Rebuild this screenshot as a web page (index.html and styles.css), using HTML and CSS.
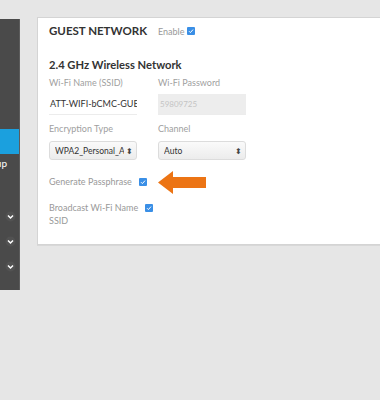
FILE: index.html
```html
<!DOCTYPE html>
<html lang="en">
<head>
  <meta charset="UTF-8">
  <meta name="viewport" content="width=device-width, initial-scale=1.0">
  <title>Guest Network</title>
  <link rel="stylesheet" href="styles.css">
</head>
<body>
  <div class="page">
    <nav class="sidebar">
      <div class="nav-item"></div>
      <div class="nav-item"></div>
      <div class="nav-item"></div>
      <div class="nav-item"></div>
      <div class="nav-item active"></div>
      <div class="nav-item sub">Setup</div>
      <div class="nav-item"></div>
      <div class="nav-item chevron"><svg width="11" height="11" viewBox="0 0 11 11"><circle cx="5.5" cy="5.5" r="5" fill="#525252"/><polyline points="3,4.5 5.5,7 8,4.5" fill="none" stroke="#fff" stroke-width="1.5"/></svg></div>
      <div class="nav-item chevron"><svg width="11" height="11" viewBox="0 0 11 11"><circle cx="5.5" cy="5.5" r="5" fill="#525252"/><polyline points="3,4.5 5.5,7 8,4.5" fill="none" stroke="#fff" stroke-width="1.5"/></svg></div>
      <div class="nav-item chevron"><svg width="11" height="11" viewBox="0 0 11 11"><circle cx="5.5" cy="5.5" r="5" fill="#525252"/><polyline points="3,4.5 5.5,7 8,4.5" fill="none" stroke="#fff" stroke-width="1.5"/></svg></div>
    </nav>

    <main class="card">
      <div class="card-head">
        <h3 class="section-title">GUEST NETWORK</h3>
        <span class="enable">Enable</span>
        <span class="check"><svg width="8" height="8" viewBox="0 0 8 8"><polyline points="2,4.2 3.4,5.6 6,2.6" fill="none" stroke="#fff" stroke-width="1"/></svg></span>
      </div>

      <h2 class="band-title">2.4 GHz Wireless Network</h2>

      <div class="fields">
        <div class="field">
          <label class="field-label">Wi-Fi Name (SSID)</label>
          <div class="text-input">ATT-WIFI-bCMC-GUE</div>
        </div>
        <div class="field">
          <label class="field-label">Wi-Fi Password</label>
          <div class="text-input disabled">59809725</div>
        </div>
        <div class="field">
          <label class="field-label">Encryption Type</label>
          <div class="select-box"><span class="select-text">WPA2_Personal_AES</span><span class="updown">&#x2B0D;</span></div>
        </div>
        <div class="field">
          <label class="field-label">Channel</label>
          <div class="select-box"><span class="select-text">Auto</span><span class="updown">&#x2B0D;</span></div>
        </div>
      </div>

      <div class="option-row generate">
        <span class="option-label">Generate Passphrase</span>
        <span class="check"><svg width="8" height="8" viewBox="0 0 8 8"><polyline points="2,4.2 3.4,5.6 6,2.6" fill="none" stroke="#fff" stroke-width="1"/></svg></span>
        <svg class="arrow" width="48" height="23" viewBox="0 0 48 23"><polygon points="0,11.5 15,0 15,6 48,6 48,17 15,17 15,23" fill="#ec7414"/></svg>
      </div>

      <div class="option-row broadcast">
        <span class="option-label wrap">Broadcast Wi-Fi Name SSID</span>
        <span class="check"><svg width="8" height="8" viewBox="0 0 8 8"><polyline points="2,4.2 3.4,5.6 6,2.6" fill="none" stroke="#fff" stroke-width="1"/></svg></span>
      </div>
    </main>
  </div>
</body>
</html>
```
FILE: styles.css
```css
body {
  margin: 0;
  background: #e6e6e6;
  font-family: Lato, 'Noto Sans', sans-serif;
  color: #333;
}
.page {
  display: flex;
  align-items: flex-start;
  height: 400px;
  overflow: hidden;
}
.sidebar {
  width: 19px;
  flex: none;
  margin-top: 19px;
  padding: 10px 0 11px;
  background: #4a4a4a;
  border-right: 1px solid #5c5c5c;
  display: flex;
  flex-direction: column;
}
.nav-item {
  height: 25px;
  flex: none;
  display: flex;
  align-items: center;
  justify-content: flex-end;
  overflow: hidden;
  white-space: nowrap;
  padding-right: 12px;
  font-size: 10px;
  color: #fff;
}
.nav-item.active {
  background: #1ba0de;
}
.nav-item.sub {
  align-items: flex-start;
  padding-top: 3px;
  box-sizing: border-box;
}
.nav-item.chevron {
  padding-right: 3px;
}
.nav-item.chevron svg {
  display: block;
}
.card {
  margin: 17px 0 0 17px;
  width: 360px;
  flex: none;
  background: #fff;
  border: 1px solid #d4d4d4;
  box-shadow: 0 1px 0 #d8d8d8;
  padding: 6px 12px 17px 11px;
}
.card-head {
  display: flex;
  align-items: center;
  height: 14px;
}
.section-title {
  margin: 0;
  font-size: 11.5px;
  font-weight: 700;
  color: #333;
  line-height: 14px;
}
.enable {
  margin-left: 11px;
  margin-right: 2px;
  font-size: 9px;
  color: #999;
}
.check {
  display: inline-flex;
  width: 8px;
  height: 8px;
  background: #3a8fe6;
  border-radius: 1px;
}
.check svg {
  display: block;
}
.band-title {
  margin: 19px 0 0;
  font-size: 11.2px;
  font-weight: 700;
  line-height: 16px;
  color: #333;
}
.fields {
  display: grid;
  grid-template-columns: 88px 88px;
  column-gap: 21px;
  row-gap: 8px;
  margin-top: 4px;
}
.field {
  display: flex;
  flex-direction: column;
}
.field-label {
  font-size: 9px;
  line-height: 12px;
  color: #a0a0a0;
}
.text-input {
  margin-top: 5px;
  height: 21px;
  box-sizing: border-box;
  line-height: 20px;
  padding-left: 1px;
  font-size: 9px;
  color: #333;
  border-bottom: 1px solid #ececec;
  white-space: nowrap;
  overflow: hidden;
}
.text-input.disabled {
  background: #ededed;
  color: #c4c4c4;
  padding-left: 2px;
  font-size: 8px;
}
.select-box {
  margin-top: 6px;
  height: 19px;
  box-sizing: border-box;
  display: flex;
  align-items: center;
  padding: 0 3px 0 5px;
  border: 1px solid #dcdcdc;
  border-radius: 3px;
  background: linear-gradient(#fafafa, #ececec);
  font-size: 8.5px;
  color: #333;
}
.select-text {
  flex: 1;
  overflow: hidden;
  white-space: nowrap;
}
.updown {
  font-size: 8px;
  color: #444;
  margin-left: 2px;
}
.option-row {
  display: flex;
  align-items: center;
}
.generate {
  margin-top: 16px;
  height: 12px;
}
.broadcast {
  margin-top: 13px;
  align-items: flex-start;
}
.option-label {
  font-size: 9px;
  line-height: 12px;
  color: #999;
  margin-right: 7px;
}
.option-label.wrap {
  width: 90px;
  line-height: 13px;
  margin-right: 6px;
}
.broadcast .check {
  margin-top: 3px;
}
.arrow {
  margin-left: 11px;
  flex: none;
}
```
